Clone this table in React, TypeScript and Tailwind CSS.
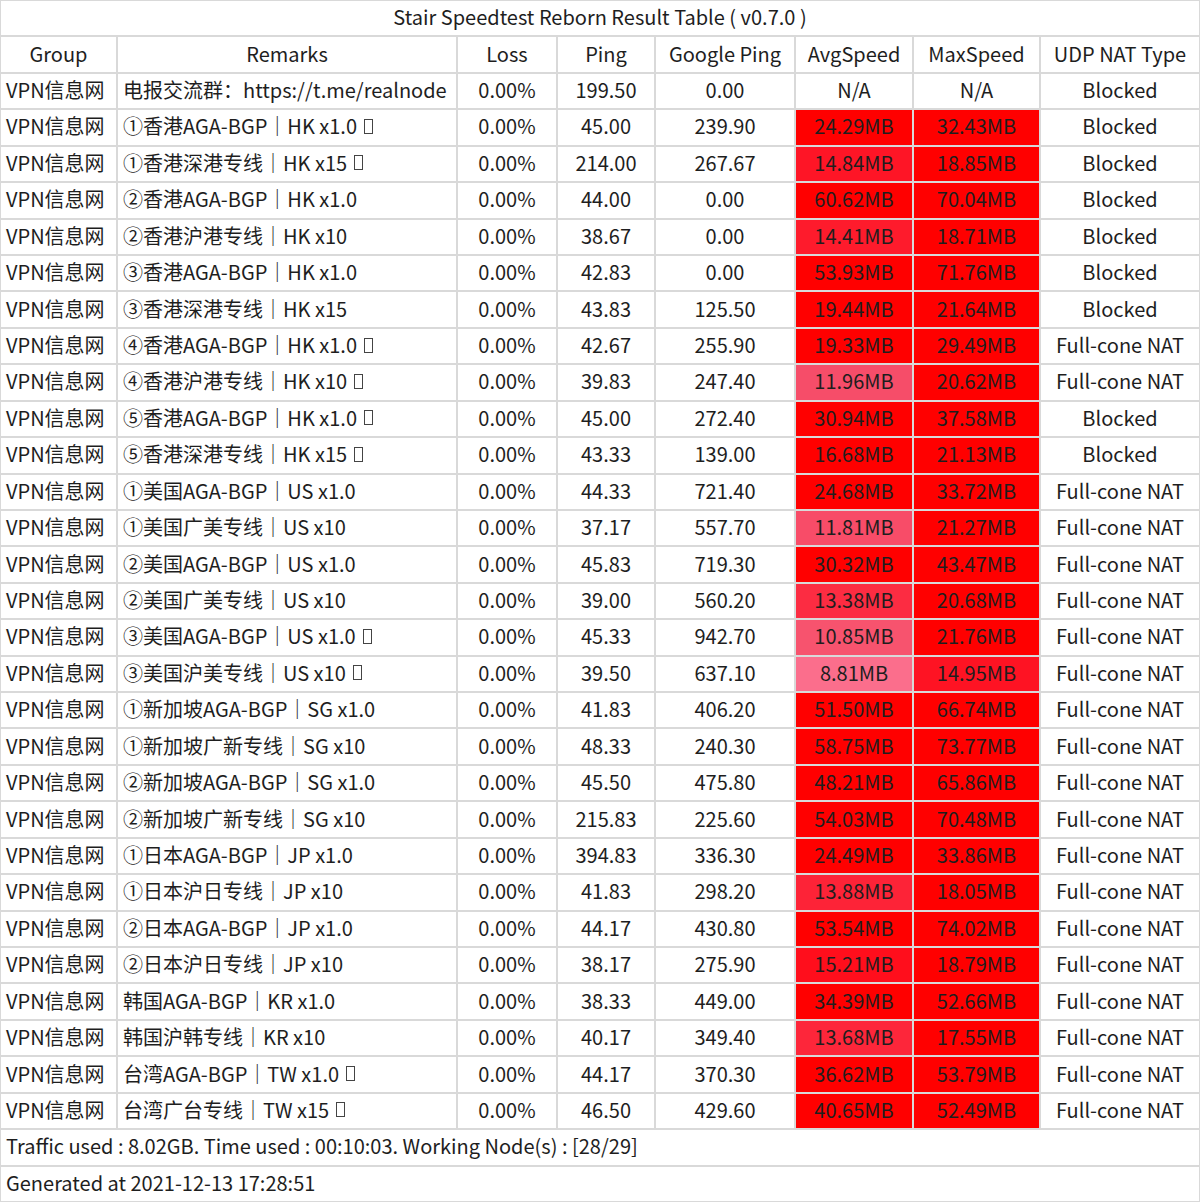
import React from "react";

type Row = [string, string, string, string, string, string, boolean?];

const rows: Row[] = [
  ["①香港AGA-BGP｜HK x1.0", "45.00", "239.90", "24.29MB", "32.43MB", "Blocked", true],
  ["①香港深港专线｜HK x15", "214.00", "267.67", "14.84MB", "18.85MB", "Blocked", true],
  ["②香港AGA-BGP｜HK x1.0", "44.00", "0.00", "60.62MB", "70.04MB", "Blocked"],
  ["②香港沪港专线｜HK x10", "38.67", "0.00", "14.41MB", "18.71MB", "Blocked"],
  ["③香港AGA-BGP｜HK x1.0", "42.83", "0.00", "53.93MB", "71.76MB", "Blocked"],
  ["③香港深港专线｜HK x15", "43.83", "125.50", "19.44MB", "21.64MB", "Blocked"],
  ["④香港AGA-BGP｜HK x1.0", "42.67", "255.90", "19.33MB", "29.49MB", "Full-cone NAT", true],
  ["④香港沪港专线｜HK x10", "39.83", "247.40", "11.96MB", "20.62MB", "Full-cone NAT", true],
  ["⑤香港AGA-BGP｜HK x1.0", "45.00", "272.40", "30.94MB", "37.58MB", "Blocked", true],
  ["⑤香港深港专线｜HK x15", "43.33", "139.00", "16.68MB", "21.13MB", "Blocked", true],
  ["①美国AGA-BGP｜US x1.0", "44.33", "721.40", "24.68MB", "33.72MB", "Full-cone NAT"],
  ["①美国广美专线｜US x10", "37.17", "557.70", "11.81MB", "21.27MB", "Full-cone NAT"],
  ["②美国AGA-BGP｜US x1.0", "45.83", "719.30", "30.32MB", "43.47MB", "Full-cone NAT"],
  ["②美国广美专线｜US x10", "39.00", "560.20", "13.38MB", "20.68MB", "Full-cone NAT"],
  ["③美国AGA-BGP｜US x1.0", "45.33", "942.70", "10.85MB", "21.76MB", "Full-cone NAT", true],
  ["③美国沪美专线｜US x10", "39.50", "637.10", "8.81MB", "14.95MB", "Full-cone NAT", true],
  ["①新加坡AGA-BGP｜SG x1.0", "41.83", "406.20", "51.50MB", "66.74MB", "Full-cone NAT"],
  ["①新加坡广新专线｜SG x10", "48.33", "240.30", "58.75MB", "73.77MB", "Full-cone NAT"],
  ["②新加坡AGA-BGP｜SG x1.0", "45.50", "475.80", "48.21MB", "65.86MB", "Full-cone NAT"],
  ["②新加坡广新专线｜SG x10", "215.83", "225.60", "54.03MB", "70.48MB", "Full-cone NAT"],
  ["①日本AGA-BGP｜JP x1.0", "394.83", "336.30", "24.49MB", "33.86MB", "Full-cone NAT"],
  ["①日本沪日专线｜JP x10", "41.83", "298.20", "13.88MB", "18.05MB", "Full-cone NAT"],
  ["②日本AGA-BGP｜JP x1.0", "44.17", "430.80", "53.54MB", "74.02MB", "Full-cone NAT"],
  ["②日本沪日专线｜JP x10", "38.17", "275.90", "15.21MB", "18.79MB", "Full-cone NAT"],
  ["韩国AGA-BGP｜KR x1.0", "38.33", "449.00", "34.39MB", "52.66MB", "Full-cone NAT"],
  ["韩国沪韩专线｜KR x10", "40.17", "349.40", "13.68MB", "17.55MB", "Full-cone NAT"],
  ["台湾AGA-BGP｜TW x1.0", "44.17", "370.30", "36.62MB", "53.79MB", "Full-cone NAT", true],
  ["台湾广台专线｜TW x15", "46.50", "429.60", "40.65MB", "52.49MB", "Full-cone NAT", true],
];

const manual: Record<string, string> = {
  "8.81MB": "#fb6e8c",
  "10.85MB": "#f7536e",
  "11.81MB": "#f84c68",
  "11.96MB": "#f64d69",
  "13.38MB": "#fc2c42",
  "13.68MB": "#fd263a",
  "13.88MB": "#fd2337",
  "14.41MB": "#fe1b2c",
  "14.84MB": "#fe1526",
  "14.95MB": "#fe1323",
  "15.21MB": "#ff0e1c",
};

function speedColor(v: string): string {
  if (manual[v]) return manual[v];
  return "#ff0000";
}

const Tofu = () => (
  <span className="inline-block w-[9px] h-[15px] border-[1.5px] border-[#444] ml-[7px] align-[-1px]" />
);

const cell = "bg-white flex items-center justify-center whitespace-nowrap pb-[2px]";
const left = "bg-white flex items-center justify-start whitespace-nowrap pl-[5px] pb-[2px]";

export default function App() {
  const headers = ["Group", "Remarks", "Loss", "Ping", "Google Ping", "AvgSpeed", "MaxSpeed", "UDP NAT Type"];
  return (
    <div
      className="w-[1200px] h-[1202px] bg-[#d9d9d9] p-[1px] grid gap-[2px] grid-cols-[115px_338px_98px_96px_138px_116px_125px_158px] grid-rows-[repeat(33,minmax(0,1fr))] text-[20px] text-[#1e1e1e] leading-none"
      style={{ fontFamily: '"Noto Sans CJK SC", "Noto Sans", sans-serif' }}
    >
      <div className={`${cell} col-span-8`}>Stair Speedtest Reborn Result Table ( v0.7.0 )</div>
      {headers.map((h) => (
        <div key={h} className={cell}>
          {h}
        </div>
      ))}
      <div className={left}>VPN信息网</div>
      <div className={left}>电报交流群：https://t.me/realnode</div>
      <div className={cell}>0.00%</div>
      <div className={cell}>199.50</div>
      <div className={cell}>0.00</div>
      <div className={cell}>N/A</div>
      <div className={cell}>N/A</div>
      <div className={cell}>Blocked</div>
      {rows.map((r, i) => (
        <React.Fragment key={i}>
          <div className={left}>VPN信息网</div>
          <div className={left}>
            {r[0]}
            {r[6] ? <Tofu /> : null}
          </div>
          <div className={cell}>0.00%</div>
          <div className={cell}>{r[1]}</div>
          <div className={cell}>{r[2]}</div>
          <div className={cell} style={{ backgroundColor: speedColor(r[3]) }}>
            {r[3]}
          </div>
          <div className={cell} style={{ backgroundColor: speedColor(r[4]) }}>
            {r[4]}
          </div>
          <div className={cell}>{r[5]}</div>
        </React.Fragment>
      ))}
      <div className={`${left} col-span-8`}>Traffic used : 8.02GB. Time used : 00:10:03. Working Node(s) : [28/29]</div>
      <div className={`${left} col-span-8`}>Generated at 2021-12-13 17:28:51</div>
    </div>
  );
}
